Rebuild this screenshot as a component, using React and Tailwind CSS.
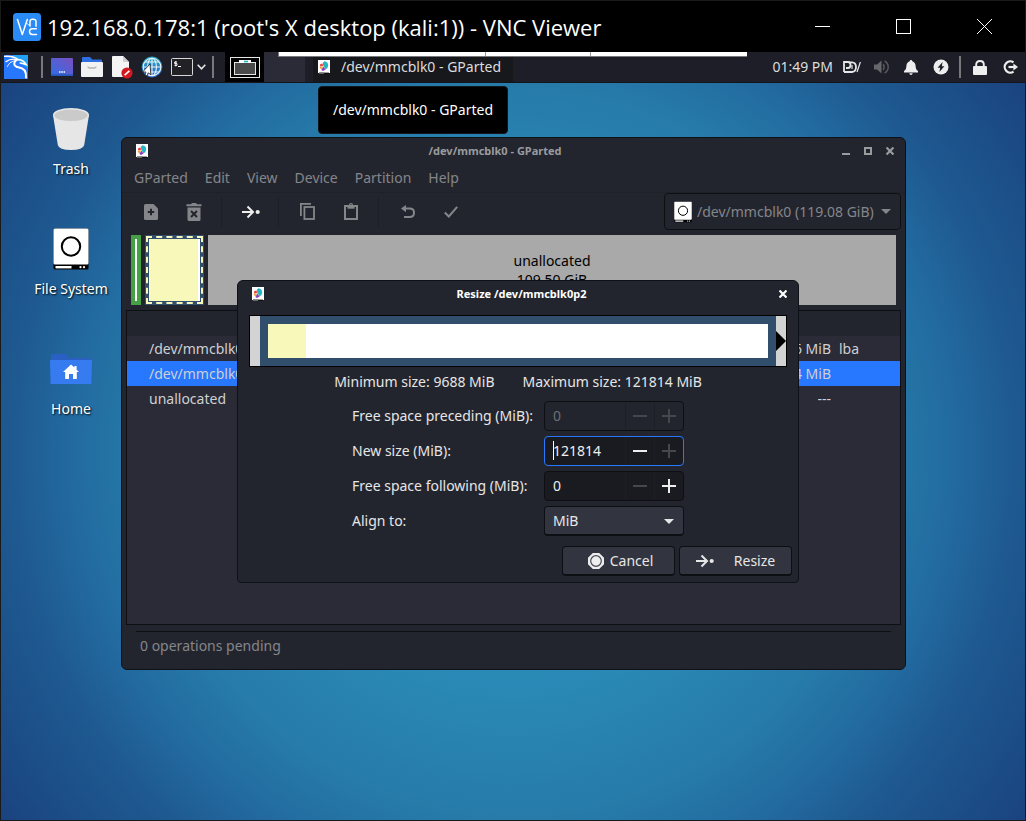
import { useState } from 'react';

const menus = ['GParted', 'Edit', 'View', 'Device', 'Partition', 'Help'];

const partitions = [
  { name: '/dev/mmcblk0p1', size: '256 MiB', flags: 'lba' },
  { name: '/dev/mmcblk0p2', size: '121814 MiB', flags: '', selected: true },
  { name: 'unallocated', size: '---', flags: '' },
];

/* ---------- icons ---------- */

function GPartedIcon() {
  return (
    <svg width="12" height="14" viewBox="0 0 12 14" className="flex-shrink-0">
      <rect width="12" height="13" fill="#fff" />
      <path d="M5 5 V2.6 L6.5 1.2 A4.4 4.4 0 0 1 10.2 5.4 A4.6 4.6 0 0 1 7.6 9.4 L6 7 Z" fill="#26b5c4" />
      <path d="M5.2 6.4 L7.6 9.6 L5 11 L3.4 10 Z" fill="#8a3fc0" />
      <path d="M5 6.4 L3.5 9.6 A4 4 0 0 1 1.6 7 Z" fill="#f4a62a" />
      <path d="M5 6 L1.8 6.4 L2.4 4 L4.6 3.4 Z" fill="#e8403c" />
      <path d="M1 13.3 H11" stroke="#111" strokeWidth="1.4" />
      <path d="M1 13.3 H6" stroke="#666" strokeWidth="1.4" />
    </svg>
  );
}

function DriveIcon({ className }) {
  return (
    <svg viewBox="0 0 36 42" className={className}>
      <rect x="0.5" y="0.5" width="35" height="41" rx="1.5" fill="#000" />
      <rect x="0.5" y="0.5" width="35" height="36" rx="1.5" fill="#fff" />
      <circle cx="18" cy="18.5" r="9.2" fill="none" stroke="#000" strokeWidth="2" />
      <rect x="2.5" y="38" width="16" height="2.4" fill="#fff" />
      <circle cx="27.5" cy="39.2" r="1.1" fill="#fff" />
      <circle cx="31" cy="39.2" r="1.1" fill="#fff" />
    </svg>
  );
}

function TrashIcon() {
  return (
    <svg width="36" height="42" viewBox="0 0 36 42">
      <path d="M0 7 L4.8 37 Q6 42 18 42 Q30 42 31.2 37 L36 7 Z" fill="#e6e6e6" />
      <ellipse cx="18" cy="7" rx="18" ry="7" fill="#e6e6e6" />
      <ellipse cx="18" cy="7.3" rx="16.6" ry="5.8" fill="#cacaca" />
    </svg>
  );
}

function HomeIcon() {
  return (
    <svg width="42" height="30" viewBox="0 0 42 30">
      <path d="M1 1 Q1 0 2 0 H15 Q16 0 17 1.5 L19 4 H40 Q41 4 41 5 V10 H1 Z" fill="#2a5fc4" />
      <path d="M0 6 H42 L41.4 30 H0.6 Z" fill="#367bf0" />
      <path d="M21 10.5 L13 18 H15.2 V25 H19 V20 H23 V25 H26.8 V18 H29 L26.6 15.7 V12 H24.4 V13.6 Z" fill="#fff" />
    </svg>
  );
}

function KaliIcon() {
  return (
    <svg width="24" height="24" viewBox="0 0 24 24">
      <rect width="24" height="24" fill="#2777ff" />
      <path d="M8 0 H24 V14 Z" fill="#22a0f5" />
      <g fill="none" stroke="#fff" strokeLinecap="round">
        <path d="M0.5 1.4 C5 1 10 1.6 14.5 4.6" strokeWidth="1.4" />
        <path d="M2 6.6 C6 4 10 3.8 13 4.8" strokeWidth="1.3" />
        <path d="M3.4 11.5 C5 7.6 8.5 5.8 12 5.6" strokeWidth="0.9" />
        <path d="M12.6 4.8 C8.6 8 10 11.8 14.4 12.2 C19.4 12.8 22.6 15.4 22 22.6" strokeWidth="1.9" />
        <path d="M13.4 4.8 C17 4.4 20 5.8 22.4 9.8 L19.4 8.8 L16.2 8" strokeWidth="1.5" />
        <path d="M21 15.6 C18.6 13.2 15.4 12.8 12.4 12.4" strokeWidth="1" />
      </g>
    </svg>
  );
}

function VncLogo() {
  return (
    <svg width="28" height="28" viewBox="0 0 28 28" fill="none" stroke="#fff" strokeWidth="1.5" strokeLinecap="round" strokeLinejoin="round">
      <rect width="28" height="28" rx="3.5" fill="#2a8af6" stroke="none" />
      <path d="M4.5 6.5 L9.3 21.5 L14.3 6.5" />
      <path d="M17 13 V8.5 Q17 6.3 20 6.3 Q23 6.3 23 8.5 V13.2" />
      <path d="M23.3 15.8 H19.3 Q16.5 15.8 16.5 18.6 Q16.5 21.5 19.3 21.5 H23.5" />
      <path d="M13.5 10 L17 13" strokeWidth="0.8" />
    </svg>
  );
}

function DesktopIcon() {
  return (
    <svg width="22" height="18" viewBox="0 0 22 18">
      <defs>
        <linearGradient id="screen" x1="0" y1="1" x2="1" y2="0">
          <stop offset="0" stopColor="#2f6fe4" />
          <stop offset="1" stopColor="#7b4fc0" />
        </linearGradient>
      </defs>
      <rect width="22" height="18" rx="1" fill="url(#screen)" />
      <rect y="16.4" width="22" height="1.6" fill="#2556b8" />
      <path d="M8 14 H14" stroke="#fff" strokeWidth="1.6" strokeDasharray="1.5 0.8" />
    </svg>
  );
}

function FolderIcon() {
  return (
    <svg width="22" height="20" viewBox="0 0 22 20">
      <path d="M1 1 Q1 0 2 0 H9 L11.5 2.6 H20 Q21 2.6 21 4 V8 H1 Z" fill="#2f6fe4" />
      <rect y="5" width="22" height="15" rx="1" fill="#f2f2f2" />
      <path d="M7 9.6 Q7 11 8.5 11 H13.5 Q15 11 15 9.6" fill="none" stroke="#b4b4b4" strokeWidth="1.4" />
    </svg>
  );
}

function DocIcon() {
  return (
    <svg width="21" height="23" viewBox="0 0 21 23">
      <path d="M0 1 Q0 0 1 0 H11 L17 6 V20 Q17 21 16 21 H1 Q0 21 0 20 Z" fill="#f4f4f4" />
      <path d="M11 0 L17 6 H11 Z" fill="#cfcfcf" />
      <circle cx="15" cy="17" r="5.6" fill="#d01a1f" />
      <path d="M12.6 19.2 L17.4 14.8" stroke="#fff" strokeWidth="1.6" />
    </svg>
  );
}

function GlobeIcon() {
  return (
    <svg width="22" height="22" viewBox="0 0 22 22">
      <defs>
        <linearGradient id="globe" x1="0" y1="0" x2="0" y2="1">
          <stop offset="0" stopColor="#2ba9bf" />
          <stop offset="1" stopColor="#2c62cf" />
        </linearGradient>
      </defs>
      <circle cx="11" cy="11" r="10.4" fill="url(#globe)" />
      <g fill="none" stroke="#e8f6fa" strokeWidth="1.1">
        <circle cx="11" cy="11" r="8.8" />
        <ellipse cx="11" cy="11" rx="4.4" ry="8.8" />
        <path d="M11 2 V20 M2.2 11 H19.8 M3.8 6 H18.2 M3.8 16 H18.2" />
      </g>
      <path d="M9 8 L1.6 16 L5 16 L4 19 L6 19.8 L7.2 16.8 L9.8 18.6 Z" fill="#fff" stroke="#222" strokeWidth="0.8" />
    </svg>
  );
}

function TerminalIcon() {
  return (
    <svg width="22" height="18" viewBox="0 0 22 18" fill="none">
      <rect x="0.5" y="0.5" width="21" height="17" rx="1" fill="#222226" stroke="#d8d8d8" />
      <path d="M6 4 H3.6 V5.6 H6 V7.4 H3.4 M4.8 3 V8.4" stroke="#fff" strokeWidth="0.9" />
      <path d="M7 8.5 H10" stroke="#fff" />
    </svg>
  );
}

function PowerManagerIcon() {
  return (
    <svg width="16" height="16" viewBox="0 0 16 16">
      <circle cx="8" cy="8" r="7.5" fill="#eee" />
      <path d="M9.6 3 L4.6 8.8 H7.2 L6.4 13 L11.4 7.2 H8.8 Z" fill="#1d1e27" />
    </svg>
  );
}

function ResizeIcon() {
  return (
    <svg width="18" height="14" viewBox="0 0 18 14" fill="none" stroke="currentColor" strokeWidth="2">
      <path d="M0 7 H10 M5.5 1.5 L11 7 L5.5 12.5" />
      <circle cx="15.7" cy="7" r="2.1" fill="currentColor" stroke="none" />
    </svg>
  );
}

function Caret() {
  return (
    <svg width="10" height="5" viewBox="0 0 10 5" className="pointer-events-none flex-shrink-0">
      <path d="M0 0 H10 L5 5 Z" fill="currentColor" />
    </svg>
  );
}

function CrossIcon() {
  return (
    <svg width="8" height="8" viewBox="0 0 8 8" stroke="currentColor" strokeWidth="2.2">
      <path d="M0.5 0.5 L7.5 7.5 M7.5 0.5 L0.5 7.5" />
    </svg>
  );
}

/* ---------- VNC window frame ---------- */

function VncTitleBar() {
  return (
    <header className="flex h-[51px] items-center bg-black pl-3 text-white">
      <VncLogo />
      <h1 className="ml-1.5 flex-1 truncate font-['Open_Sans',sans-serif] text-[22px] leading-8">
        192.168.0.178:1 (root's X desktop (kali:1)) - VNC Viewer
      </h1>
      <button aria-label="Minimize" className="flex w-[81px] justify-center">
        <svg width="15" height="15" stroke="#fff"><path d="M0 7.5 H15" /></svg>
      </button>
      <button aria-label="Maximize" className="flex w-[81px] justify-center">
        <svg width="15" height="15" fill="none" stroke="#fff"><rect x="0.5" y="0.5" width="14" height="14" /></svg>
      </button>
      <button aria-label="Close" className="flex w-[81px] justify-center">
        <svg width="15" height="15" stroke="#fff"><path d="M0 0 L15 15 M15 0 L0 15" /></svg>
      </button>
    </header>
  );
}

/* ---------- Xfce panel ---------- */

function Launcher({ label, children }) {
  return (
    <button aria-label={label} className="flex h-full w-[30px] items-center justify-center">
      {children}
    </button>
  );
}

function Divider() {
  return <span className="h-[22px] w-0.5 bg-[#77777c]" />;
}

function Panel() {
  return (
    <nav className="relative flex h-[31px] items-center border-b border-[#14151b] bg-[#1d1e27] text-sm text-[#dcdcdc]">
      <button aria-label="Applications" className="mr-[13px] ml-[3px]"><KaliIcon /></button>
      <Divider />
      <div className="ml-1 flex h-full items-center">
        <Launcher label="Show desktop"><DesktopIcon /></Launcher>
        <Launcher label="Files"><FolderIcon /></Launcher>
        <Launcher label="Text editor"><DocIcon /></Launcher>
        <Launcher label="Web browser"><GlobeIcon /></Launcher>
        <Launcher label="Terminal"><TerminalIcon /></Launcher>
      </div>
      <svg width="9" height="6" fill="none" stroke="#e6e6e6" strokeWidth="1.6"><path d="M0.7 0.8 L4.5 4.8 L8.3 0.8" /></svg>
      <span className="ml-1.5 flex"><Divider /></span>

      <button aria-label="Workspace 1" className="ml-[11px] flex h-full w-[39px] items-center justify-center bg-black">
        <svg width="30" height="21" viewBox="0 0 30 21" fill="none">
          <rect x="0.5" y="0.5" width="29" height="20" stroke="#e6e6e6" />
          <rect x="4.5" y="5.5" width="21" height="12" fill="#4a4a4a" stroke="#e6e6e6" />
          <rect x="9" y="3" width="12" height="3" fill="#fff" />
          <path d="M14 4.5 H18" stroke="#26b5c4" strokeWidth="1.6" />
        </svg>
      </button>
      <button aria-label="Workspace 2" className="h-full w-[41px] bg-[#2a2b36]" />
      <button className="ml-2 flex h-full w-[200px] items-center gap-[11px] bg-[#17181c] pl-[5px]">
        <GPartedIcon />
        /dev/mmcblk0 - GParted
      </button>

      <div className="ml-auto flex items-center pr-[7px]">
        <time>01:49 PM</time>
        <svg width="18" height="12" viewBox="0 0 18 12" fill="none" stroke="#e6e6e6" strokeWidth="1.8" className="ml-2.5">
          <path d="M1 11 V1 H5 Q7.5 1 7.5 4 Q7.5 7 5 7 H3" />
          <path d="M1 11 H9 Q13 10.6 13 6 Q13 1.6 9 1.4 H6" />
          <path d="M9 4 V8" strokeWidth="1.2" />
          <path d="M14 11 L17.4 1" strokeWidth="1.2" />
        </svg>
        <svg width="15" height="14" viewBox="0 0 15 14" className="ml-[13px]">
          <path d="M0 4.5 H3.2 L7.5 0.5 V13.5 L3.2 9.5 H0 Z" fill="#67676b" />
          <path d="M9.2 4 Q11 7 9.2 10 M10.6 1 Q14.2 3 14.2 7 Q14.2 11 10.6 13" fill="none" stroke="#55555a" strokeWidth="1.5" />
        </svg>
        <svg width="14" height="15" viewBox="0 0 14 15" fill="#eee" className="ml-[15px]">
          <path d="M7 0 Q8.3 0 8.3 1.3 Q11.4 2.4 11.6 6 Q11.8 10 14 11 V12.4 H0 V11 Q2.2 10 2.4 6 Q2.6 2.4 5.7 1.3 Q5.7 0 7 0 Z" />
          <path d="M5.2 13.2 H8.8 Q8.4 15 7 15 Q5.6 15 5.2 13.2 Z" />
        </svg>
        <span className="ml-[15px]"><PowerManagerIcon /></span>
        <span className="mx-2.5 flex"><Divider /></span>
        <svg width="14" height="15" viewBox="0 0 14 15" className="ml-0.5">
          <rect y="6" width="14" height="9" rx="1" fill="#eee" />
          <path d="M3.2 7 V4.5 Q3.2 1 7 1 Q10.8 1 10.8 4.5 V7" fill="none" stroke="#eee" strokeWidth="1.9" />
        </svg>
        <svg width="15" height="14" viewBox="0 0 15 14" fill="none" stroke="#eee" strokeWidth="2.2" className="ml-4">
          <path d="M10.5 2.4 A5.6 5.6 0 1 0 10.5 11.6" />
          <path d="M5.5 7 H11" />
          <path d="M10.4 3.6 L15 7 L10.4 10.4 Z" fill="#eee" stroke="none" />
        </svg>
      </div>

      {/* Collapsed edge of the VNC viewer toolbar */}
      <div className="absolute top-0 left-[277px] flex h-[5px] w-[469px] border-b border-l border-[#77777c] bg-white">
        <span className="ml-[206px] h-1 w-px bg-[#999]" />
        <span className="ml-[104px] h-1 w-px bg-[#999]" />
      </div>
    </nav>
  );
}

/* ---------- desktop ---------- */

function Shortcut({ label, children }) {
  return (
    <button className="flex h-[120px] w-[140px] flex-col items-center gap-1.5 text-sm text-white">
      <span className="flex h-12 items-center">{children}</span>
      <span className="leading-5 [text-shadow:1px_1px_2px_#000]">{label}</span>
    </button>
  );
}

function ToolButton({ label, active, children }) {
  return (
    <button
      aria-label={label}
      className={`flex h-full w-[43px] items-center justify-center ${active ? 'text-[#eee]' : 'text-[#85868a]'}`}
    >
      {children}
    </button>
  );
}

function ToolDivider() {
  return <span className="mx-[6px] h-[30px] w-0.5 border-l border-[#1d1f26]" />;
}

function Toolbar() {
  return (
    <div className="flex h-[38px] items-center border-t border-[#1f2128] pr-1 pl-[7px]">
      <ToolButton label="New">
        <svg width="14" height="16" viewBox="0 0 14 16">
          <path d="M1.5 0 H9.5 L14 4.5 V14.5 Q14 16 12.5 16 H1.5 Q0 16 0 14.5 V1.5 Q0 0 1.5 0 Z" fill="currentColor" />
          <path d="M7 4.8 V11.2 M3.8 8 H10.2" stroke="#23252e" strokeWidth="2" />
        </svg>
      </ToolButton>
      <ToolButton label="Delete">
        <svg width="16" height="18" viewBox="0 0 16 18">
          <path d="M0.5 1.2 H5 L6 0 H10 L11 1.2 H15.5 V3.2 H0.5 Z M1.5 4.4 H14.5 V16.5 Q14.5 18 13 18 H3 Q1.5 18 1.5 16.5 Z" fill="currentColor" />
          <path d="M5 8 L11 14 M11 8 L5 14" stroke="#23252e" strokeWidth="2" />
        </svg>
      </ToolButton>
      <ToolDivider />
      <ToolButton label="Resize/Move" active><ResizeIcon /></ToolButton>
      <ToolDivider />
      <ToolButton label="Copy">
        <svg width="15" height="17" viewBox="0 0 15 17" fill="none" stroke="currentColor" strokeWidth="1.8">
          <path d="M0.9 13 V0.9 H11" />
          <rect x="4.4" y="4" width="9.6" height="12" />
        </svg>
      </ToolButton>
      <ToolButton label="Paste">
        <svg width="14" height="17" viewBox="0 0 14 17" fill="none" stroke="currentColor" strokeWidth="2">
          <rect x="1" y="3" width="12" height="13" />
          <path d="M3.5 4.5 H10.5" strokeWidth="2.4" />
          <circle cx="7" cy="2.2" r="1.5" strokeWidth="1.2" />
        </svg>
      </ToolButton>
      <ToolDivider />
      <ToolButton label="Undo">
        <svg width="14" height="13" viewBox="0 0 14 13" fill="none" stroke="currentColor" strokeWidth="2">
          <path d="M3 3.6 H8.6 Q13 3.6 13 7.7 Q13 12 8.6 12 H3" />
          <path d="M0 3.6 L5 0 V7.2 Z" fill="currentColor" stroke="none" />
        </svg>
      </ToolButton>
      <ToolButton label="Apply">
        <svg width="14" height="12" viewBox="0 0 14 12" fill="none" stroke="currentColor" strokeWidth="2">
          <path d="M0.8 6.5 L4.8 10.5 L13.2 0.8" />
        </svg>
      </ToolButton>

      <div className="relative ml-auto flex h-[37px] w-[237px] items-center rounded border border-[#0e0f13] text-[#85868a]">
        <DriveIcon className="pointer-events-none absolute left-[9px] h-[22px] w-[18px]" />
        <select
          aria-label="Device"
          className="h-full w-full appearance-none rounded bg-transparent pl-8 text-sm [&>option]:bg-[#23252e]"
        >
          <option>/dev/mmcblk0 (119.08 GiB)</option>
        </select>
        <span className="pointer-events-none absolute right-[9px]"><Caret /></span>
      </div>
    </div>
  );
}

function PartitionMap() {
  return (
    <div className="mx-[9px] mt-[5px] flex h-[70px] gap-1">
      <div className="w-2.5 bg-[#46a046] p-1">
        <div className="h-full bg-white" />
      </div>
      <div className="w-[59px] bg-[#314e6c] p-px">
        <div className="h-full border-2 border-dashed border-[#f9f8bb] p-px">
          <div className="h-full border-r-2 border-white bg-[#f9f8bb]" />
        </div>
      </div>
      <div className="flex flex-1 flex-col items-center justify-center bg-[#a9a9a9] text-sm leading-[19px] text-black">
        <span>unallocated</span>
        <span>109.50 GiB</span>
      </div>
    </div>
  );
}

function GPartedWindow() {
  return (
    <section className="absolute top-[54px] left-[120px] flex w-[785px] flex-col rounded-md border border-[#0e1118] bg-[#23252e] text-sm text-[#85868a]">
      <div className="flex h-[26px] items-center pr-[11px] pl-3.5 text-[#9a9b9f]">
        <GPartedIcon />
        <h2 className="flex-1 text-center text-[11px] font-bold">/dev/mmcblk0 - GParted</h2>
        <div className="flex items-center justify-end gap-3.5">
          <button aria-label="Minimize window" className="h-2 w-2 border-b-2 border-current" />
          <button aria-label="Maximize window" className="h-2 w-2 border-2 border-current" />
          <button aria-label="Close window"><CrossIcon /></button>
        </div>
      </div>
      <div className="flex h-7 items-center gap-[17px] pl-3">
        {menus.map((menu) => (
          <button key={menu}>{menu}</button>
        ))}
      </div>
      <Toolbar />
      <PartitionMap />

      <div className="mx-1 mt-[5px] h-[315px] border border-[#0e0f13] bg-[#2a2b36]">
        <table className="w-full table-fixed text-[#cfd0d2]">
          <thead>
            <tr className="h-[25px] bg-[#23252e]">
              <th aria-label="Partition" className="w-[300px]" />
              <th aria-label="Size" />
              <th aria-label="Flags" className="w-[69px]" />
            </tr>
          </thead>
          <tbody>
            {partitions.map((p) => (
              <tr key={p.name} className={`h-[25px] ${p.selected ? 'bg-[#2777ff]' : ''}`}>
                <td className="pl-[22px]">{p.name}</td>
                <td className="text-right">{p.size}</td>
                <td className="pl-2">{p.flags}</td>
              </tr>
            ))}
          </tbody>
        </table>
      </div>

      <footer className="mx-3.5 mt-1.5 h-[38px] border-t border-[#0e0f13] pt-1 pl-1">
        0 operations pending
      </footer>
    </section>
  );
}

/* ---------- resize dialog ---------- */

function SpinField({ id, label, value, onChange, disabled, focused, canDown, canUp }) {
  let look = 'border-[#0e0f13] bg-[#191b20] text-[#eee]';
  if (disabled) look = 'border-[#0e0f13] bg-[#23252e] text-[#6d6f75]';
  if (focused) look = 'border-[#2777ff] bg-[#191b20] text-[#eee]';

  return (
    <>
      <label htmlFor={id}>{label}</label>
      <div className={`relative flex h-[30px] rounded border ${look}`}>
        {focused && <span className="absolute top-1 left-2 h-[19px] w-px bg-white" />}
        <input
          id={id}
          inputMode="numeric"
          value={value}
          onChange={(e) => onChange?.(e.target.value)}
          disabled={disabled}
          className="min-w-0 flex-1 bg-transparent pl-2 outline-none"
        />
        <button
          aria-label={`Decrease ${label}`}
          className={`flex w-[29px] items-center justify-center border-l border-[#1d1f26] ${canDown ? 'text-[#eee]' : 'text-[#45474d]'}`}
        >
          <svg width="14" height="14" stroke="currentColor" strokeWidth="2"><path d="M0 7 H14" /></svg>
        </button>
        <button
          aria-label={`Increase ${label}`}
          className={`flex w-[29px] items-center justify-center border-l border-[#1d1f26] ${canUp ? 'text-[#eee]' : 'text-[#45474d]'}`}
        >
          <svg width="14" height="14" stroke="currentColor" strokeWidth="2"><path d="M0 7 H14 M7 0 V14" /></svg>
        </button>
      </div>
    </>
  );
}

function ResizeDialog() {
  const [size, setSize] = useState('121814');
  const [following, setFollowing] = useState('0');

  return (
    <section
      role="dialog"
      aria-label="Resize /dev/mmcblk0p2"
      className="absolute top-[197px] left-[236px] flex w-[562px] flex-col rounded-t-md rounded-b-sm border border-[#0e1118] bg-[#23252e] text-sm text-[#e6e6e6]"
    >
      <div className="flex h-[26px] items-center pr-[11px] pl-3.5 text-white">
        <GPartedIcon />
        <h2 className="flex-1 text-center text-[11px] font-bold">Resize /dev/mmcblk0p2</h2>
        <button aria-label="Close dialog"><CrossIcon /></button>
      </div>

      <div className="mx-[11px] mt-2 flex h-[52px] border border-black bg-[#314e6c]">
        <div className="w-2.5 bg-[#d3d3d3]" />
        <div className="flex flex-1 p-2">
          <div className="w-[38px] bg-[#f9f8bb]" />
          <div className="flex-1 bg-white" />
        </div>
        <div className="flex w-2.5 items-center bg-[#d3d3d3]">
          <svg width="10" height="20"><path d="M0 0 L10 10 L0 20 Z" /></svg>
        </div>
      </div>

      <div className="mt-[5px] flex justify-center gap-7 leading-5">
        <span>Minimum size: 9688 MiB</span>
        <span>Maximum size: 121814 MiB</span>
      </div>

      <div className="mt-[9px] grid grid-cols-[192px_140px] items-center justify-center gap-y-[5px]">
        <SpinField id="preceding" label="Free space preceding (MiB):" value="0" disabled />
        <SpinField id="size" label="New size (MiB):" value={size} onChange={setSize} focused canDown />
        <SpinField id="following" label="Free space following (MiB):" value={following} onChange={setFollowing} canUp />
        <label htmlFor="align">Align to:</label>
        <div className="relative flex items-center">
          <select
            id="align"
            defaultValue="MiB"
            className="h-[30px] w-full appearance-none rounded border border-b-2 border-[#0e0f13] bg-[#323540] pl-2"
          >
            <option>Cylinder</option>
            <option>MiB</option>
            <option>None</option>
          </select>
          <span className="pointer-events-none absolute right-2.5"><Caret /></span>
        </div>
      </div>

      <div className="mt-2.5 mb-1.5 flex justify-end gap-1 pr-1.5">
        <button className="flex h-[30px] w-[113px] items-center justify-center gap-1.5 rounded border border-b-2 border-[#0e0f13] bg-[#323540] pl-1">
          <svg width="16" height="16" viewBox="0 0 16 16">
            <path d="M4.8 0 H11.2 L16 4.8 V11.2 L11.2 16 H4.8 L0 11.2 V4.8 Z" fill="#eee" />
            <circle cx="8" cy="8" r="5.3" fill="#eee" stroke="#454854" strokeWidth="1.2" />
          </svg>
          Cancel
        </button>
        <button className="flex h-[30px] w-[113px] items-center justify-center gap-5 rounded border border-b-2 border-[#0e0f13] bg-[#323540]">
          <ResizeIcon />
          Resize
        </button>
      </div>
    </section>
  );
}

export default function App() {
  return (
    <div className="flex min-h-screen flex-col border border-[#1a1a1a] font-['Noto_Sans',sans-serif]">
      <VncTitleBar />
      <Panel />
      <main className="relative flex-1 bg-[radial-gradient(circle_at_50%_50%,#2c9dc3_0%,#2a88b5_39%,#267ba9_58%,#226aa0_70%,#1e5990_80%,#1a437f_100%)]">
        <div className="flex w-[140px] flex-col pt-[22px]">
          <Shortcut label="Trash"><TrashIcon /></Shortcut>
          <Shortcut label="File System"><DriveIcon className="h-[42px] w-9" /></Shortcut>
          <Shortcut label="Home"><HomeIcon /></Shortcut>
        </div>

        <GPartedWindow />
        <ResizeDialog />

        <div role="tooltip" className="absolute top-[3px] left-[317px] rounded-sm border border-[#14151b] bg-black px-3.5 py-[13px] text-sm text-white">
          /dev/mmcblk0 - GParted
        </div>
      </main>
    </div>
  );
}
